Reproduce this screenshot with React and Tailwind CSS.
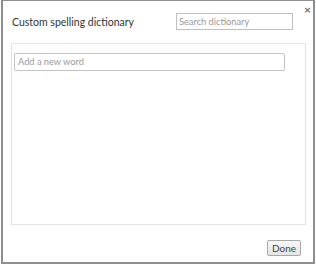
import React from 'react'

export default function App() {
    return (
        <div className="w-[316px] h-[266px] bg-white" style={{ fontFamily: 'Lato, "Open Sans", sans-serif' }}>
            <div className="relative ml-px w-[314px] h-[264px] border-x-2 border-b-2 border-t border-[#8e8e8e] bg-white flex flex-col">
                <button className="absolute right-[2px] top-[3px] text-[#6f6f6f] text-[12px] leading-none font-bold">×</button>
                <div className="flex items-start h-[42px] pt-[12px]">
                    <span className="ml-[9px] mt-[1px] text-[10.5px] leading-[16px] text-[#333]">Custom spelling dictionary</span>
                    <input
                        className="ml-auto mr-[20px] w-[117px] h-[17px] border border-[#bfbfbf] px-[2px] text-[9.25px] text-[#333] placeholder:text-[#9a9a9a] outline-none"
                        placeholder="Search dictionary"
                    />
                </div>
                <div className="ml-[8px] w-[295px] h-[182px] border border-[#e4e4e4] pt-[3px] pl-[2px]">
                    <input
                        className="w-[271px] h-[18px] border border-[#c4c4c4] rounded-[2px] px-[3px] text-[9.25px] text-[#333] placeholder:text-[#9a9a9a] outline-none"
                        placeholder="Add a new word"
                    />
                </div>
                <div className="flex justify-end pt-[15px] pr-[12px]">
                    <button className="w-[34px] h-[16px] border border-[#a8a8a8] rounded-[2px] bg-gradient-to-b from-[#f8f8f8] to-[#e4e4e4] text-[10px] leading-[14px] text-[#444]">Done</button>
                </div>
            </div>
        </div>
    )
}
